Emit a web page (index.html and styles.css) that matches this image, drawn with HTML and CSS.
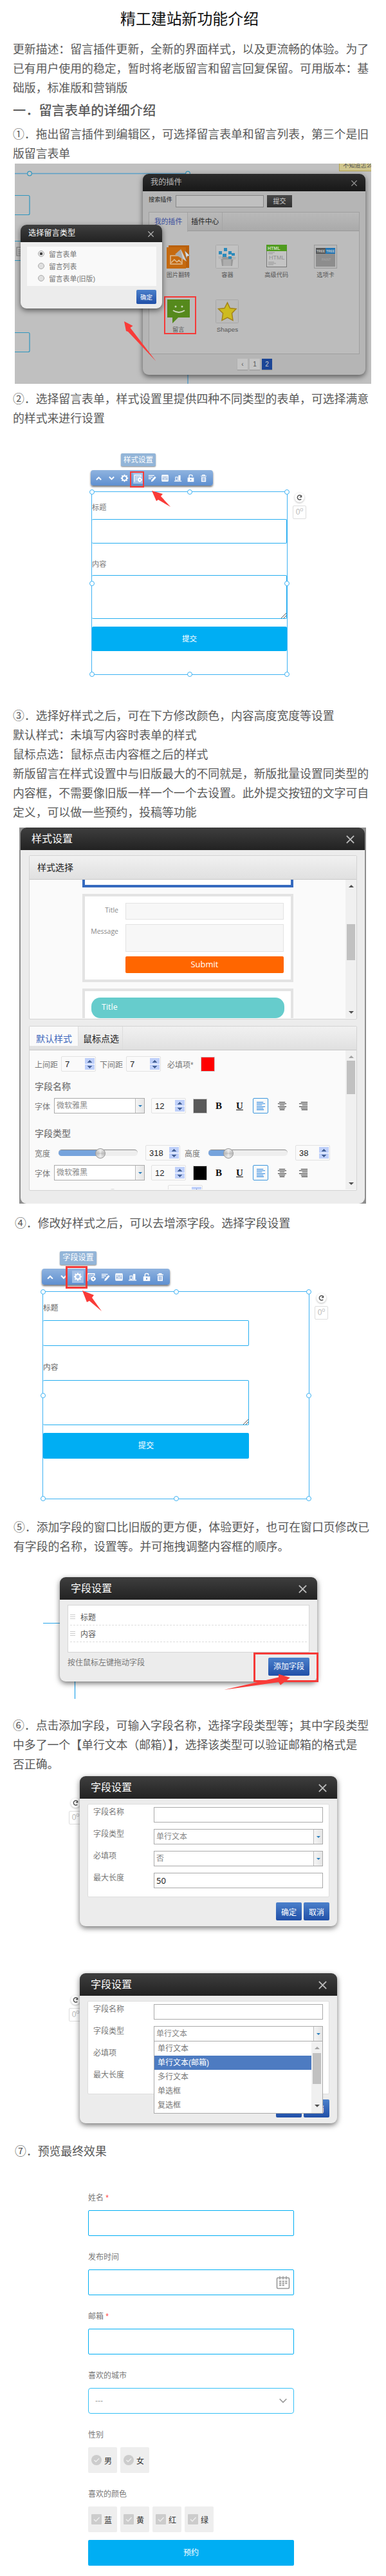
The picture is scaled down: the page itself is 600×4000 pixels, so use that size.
FILE: index.html
```html
<!DOCTYPE html>
<html lang="zh-CN">
<head>
  <meta charset="UTF-8" />
  <meta name="viewport" content="width=device-width, initial-scale=1.0" />
  <title>精工建站新功能介绍</title>
  <link rel="stylesheet" href="styles.css">
</head>
<body>
  <!-- shared icons -->
  <svg class="defs" width="0" height="0">
    <symbol id="i-up" viewBox="0 0 16 16"><path d="M3.5 11 8 6.500l4.500 4.500" fill="none" stroke="currentColor" stroke-width="2.400"/></symbol>
    <symbol id="i-down" viewBox="0 0 16 16"><path d="M3.500 5.500 8 10l4.500-4.500" fill="none" stroke="currentColor" stroke-width="2.400"/></symbol>
    <symbol id="i-gear" viewBox="0 0 16 16"><circle cx="8" cy="8" r="4.300" fill="none" stroke="currentColor" stroke-width="2.400"/><path d="M8 1v3M8 12v3M1 8h3M12 8h3M3 3l2 2M11 11l2 2M13 3l-2 2M5 11l-2 2" stroke="currentColor" stroke-width="2.200"/></symbol>
    <symbol id="i-style" viewBox="0 0 16 16"><path d="M1.500 15V2h12v4M4 5h2m1 0h2m1 0h2M4 8h2m1 0h1M4 11h2" fill="none" stroke="currentColor" stroke-width="1.500"/><circle cx="11.500" cy="11" r="2.800" fill="none" stroke="currentColor" stroke-width="2.400"/><path d="M11.500 6.500v2M11.500 13.500v2M7 11h2M14 11h2" stroke="currentColor" stroke-width="1.800"/></symbol>
    <symbol id="i-edit" viewBox="0 0 16 16"><path d="M1 3h11M1 6h8M1 9h5" stroke="currentColor" stroke-width="1.500"/><path d="m6 15 .800-3.500L13 4.500l2.600 2.200-6.200 7z" fill="currentColor"/></symbol>
    <symbol id="i-sliders" viewBox="0 0 16 16"><rect x="1.500" y="1.500" width="13" height="13" rx="1.500" fill="currentColor"/><path d="M4.500 4v8M8 4v8M11.500 4v8M3.300 9h2.400M6.800 6h2.400M10.300 9.500h2.400" stroke="#7299cf" stroke-width="1.200"/></symbol>
    <symbol id="i-align" viewBox="0 0 16 16"><path d="M1 13.700h14" stroke="currentColor" stroke-width="1.500"/><rect x="3.500" y="6" width="4" height="6" fill="none" stroke="currentColor" stroke-width="1.300"/><rect x="9" y="2.500" width="4" height="10" fill="currentColor"/></symbol>
    <symbol id="i-lock" viewBox="0 0 16 16"><path d="M5 8V3.500C5 1 11 1 11 3.500V5" fill="none" stroke="currentColor" stroke-width="1.700"/><path d="M2 7h12v8H2z" fill="currentColor"/><path d="M8 9.500v3" stroke="#6893d0" stroke-width="2"/></symbol>
    <symbol id="i-trash" viewBox="0 0 16 16"><path d="M2.500 4h11M6 3.500V2h4v1.500" fill="none" stroke="currentColor" stroke-width="1.500"/><path d="M3.500 6v9h9V6z" fill="currentColor"/><path d="M6 7v6.500M8 7v6.500M10 7v6.500" stroke="#6893d0"/></symbol>
    <symbol id="i-close" viewBox="0 0 16 16"><path d="m2 2 12 12M14 2 2 14" stroke="currentColor" stroke-width="2"/></symbol>
    <symbol id="i-rotate" viewBox="0 0 16 16"><path d="M12 11.500A5 5 0 1 1 12 4.500" fill="none" stroke="#555" stroke-width="2.200"/><path d="M13.500 2v6h-6z" fill="#555"/></symbol>
    <symbol id="i-left" viewBox="0 0 16 16"><path d="M1 1.500h11M1 4h14M1 6.500h9M1 9h14M1 11.500h11M1 14h12" stroke="currentColor" stroke-width="1.100"/></symbol>
    <symbol id="i-center" viewBox="0 0 16 16"><path d="M3 1.500h10M1 4h14M4 6.500h8M1 9h14M3 11.500h10M4 14h8" stroke="currentColor" stroke-width="1.100"/></symbol>
    <symbol id="i-right" viewBox="0 0 16 16"><path d="M4 1.500h11M1 4h14M6 6.500h9M1 9h14M4 11.500h11M5 14h10" stroke="currentColor" stroke-width="1.100"/></symbol>
    <symbol id="i-cal" viewBox="0 0 22 22"><rect x="1.500" y="4" width="19" height="16.500" rx="1.500" fill="none" stroke="currentColor" stroke-width="1.600"/><path d="M6 1.500v5M11 1.500v5M16 1.500v5" stroke="currentColor" stroke-width="1.500"/><path d="M5 9.500h12.500M5 12.500h12.500M5 15.500h8" stroke="currentColor" stroke-width="1.800" stroke-dasharray="3.200 1.400"/></symbol>
  </svg>

  <h1>精工建站新功能介绍</h1>
  <p>更新描述：留言插件更新，全新的界面样式，以及更流畅的体验。为了<br>已有用户使用的稳定，暂时将老版留言和留言回复保留。可用版本：基<br>础版，标准版和营销版</p>
  <h2>一．留言表单的详细介绍</h2>
  <p>①．拖出留言插件到编辑区，可选择留言表单和留言列表，第三个是旧<br>版留言表单</p>

  <!-- plugin window -->
  <div class="fig fig-plugin">
    <svg class="layer" width="554" height="342" fill="none" stroke="#2f96be" stroke-width="1.200">
      <path d="M0 15.500h269M269 15v327" stroke="#5a9fc8" stroke-width="1.500"/>
      <circle cx="23" cy="15.500" r="3.300" fill="#c8c8c8"/><circle cx="269" cy="15.500" r="3.300" fill="#c8c8c8"/>
      <path d="M0 49.500h21q2 0 2 2v26q0 2-2 2H0M0 120.500h23v30H0M0 262.500h21q2 0 2 2v26q0 2-2 2H0"/>
      <path d="M10 130H3v13h7M5 134h4m-4 3h4m-4 3h4" stroke="#777"/>
    </svg>
    <div class="note">不知道怎么</div>
    <div class="win win-plugin">
      <div class="win-head">我的插件<svg><use href="#i-close"/></svg></div>
      <div class="search"><span>搜索插件</span><div class="search-in"></div><div class="search-btn">提交</div></div>
      <div class="tabbox">
        <div class="tabs"><span class="tab on">我的插件</span><span class="tab">插件中心</span></div>
        <div class="plugins">
          <div class="plugin">
            <svg viewBox="0 0 36 37"><path d="M3 1h32v35H3z" fill="#b9600c"/><path d="M0 4h30v33H0z" fill="#c56a10"/><path d="M6 17h18v13H6z" fill="none" stroke="#e0bd92" stroke-width="1.500"/><path d="m7 28 5-5 4 4 3-3 4 4" fill="none" stroke="#e0bd92" stroke-width="1.500"/><path d="M13 15 22 7l9 19z" fill="#aaa"/><path d="m22 7 3 14 6 5z" fill="#d0d0d0"/><path d="m28 9 8 8-4 1-1 4z" fill="#ddd" stroke="#777" stroke-width=".5"/></svg>
            <span>图片翻转</span>
          </div>
          <div class="plugin">
            <svg viewBox="0 0 36 37"><rect x=".5" y=".5" width="35" height="36" rx="1" fill="#c2c2c2" stroke="#aaa"/><path d="M8 19h20l-2 14H10z" fill="#999"/><path d="m4 18 5-1 2 5H5zM26 18l6 1-1 4h-6z" fill="#b5b5b5"/><path d="M12 23h12v10H12z" fill="#adadad"/><path d="M5 10h5v5H5zM13 5h5v5h-5zM11 14h6v5h-6zM20 10h5v5h-5zM25 13h5v4h-5zM20 18h5v4h-5z" fill="#2c8abb"/></svg>
            <span>容器</span>
          </div>
          <div class="plugin">
            <svg viewBox="0 0 36 37"><rect x="2.500" y=".5" width="31" height="34" fill="#c4c4c4" stroke="#777"/><path d="M2 0h32v10H2z" fill="#4f9b1e"/><text x="4" y="8" font-size="7" font-weight="bold" fill="#cfe0c0">HTML</text><text x="6" y="23" font-size="9" fill="#919191">HTML</text><path d="M5 12h10M5 14h7M5 27h9M5 29h12M5 31h8" stroke="#999"/></svg>
            <span>高级代码</span>
          </div>
          <div class="plugin">
            <svg viewBox="0 0 36 37"><rect x=".5" y=".5" width="35" height="36" fill="#b9b9b9" stroke="#999"/><path d="M3 5h15v9H3z" fill="#555"/><path d="M18 5h15v9H18z" fill="#1d74b5"/><path d="M3 14h30v20H3z" fill="#8d8d8d"/><text x="4" y="11.500" font-size="5" font-weight="bold" fill="#ccc">TREE</text><text x="19" y="11.500" font-size="5" font-weight="bold" fill="#ccc">TREE</text><text x="12" y="25" font-size="5" fill="#a8a8a8">PAINT</text></svg>
            <span>选项卡</span>
          </div>
          <div class="plugin">
            <svg viewBox="0 0 36 37"><path d="M1 0h35v28H18l-9 9v-9H1z" fill="#55891c"/><circle cx="14" cy="11" r="1.500" fill="#ccd8bd"/><circle cx="24" cy="11" r="1.500" fill="#ccd8bd"/><path d="M10 17q9 6 18 0" fill="none" stroke="#ccd8bd" stroke-width="2"/></svg>
            <span>留言</span>
          </div>
          <div class="plugin">
            <svg viewBox="0 0 36 37"><rect x=".5" y=".5" width="35" height="36" rx="1" fill="#bababa" stroke="#a8a8a8"/><path d="m18.500 5 4 8.500 9.500 1-6.500 7 1.500 11-8.500-4.500-8.500 4.500 1.500-11-7-7 9.500-1z" fill="#cdbb1f" stroke="#a3831a" stroke-width="1.500"/></svg>
            <span class="latin">Shapes</span>
          </div>
        </div>
      </div>
      <div class="pager"><span>‹</span><span>1</span><span class="on">2</span></div>
    </div>
    <div class="red-box mark-plugin"></div>
    <div class="win win-type">
      <div class="win-head">选择留言类型<svg><use href="#i-close"/></svg></div>
      <div class="type-list">
        <div><i class="radio on"></i>留言表单</div>
        <div><i class="radio"></i>留言列表</div>
        <div><i class="radio"></i>留言表单(旧版)</div>
      </div>
      <div class="btn-blue">确定</div>
    </div>
    <svg class="layer" width="554" height="342"><path d="m170 245 13.500 7-4 3L219.500 307 176 261l-3-1z" fill="#f93b38"/></svg>
  </div>

  <p>②．选择留言表单，样式设置里提供四种不同类型的表单，可选择满意<br>的样式来进行设置</p>

  <!-- style setting button -->
  <div class="fig fig-style">
    <div class="tip">样式设置</div>
    <div class="toolbar">
      <svg><use href="#i-up"/></svg><svg><use href="#i-down"/></svg><svg><use href="#i-gear"/></svg><svg class="on"><use href="#i-style"/></svg><svg><use href="#i-edit"/></svg><svg><use href="#i-sliders"/></svg><svg><use href="#i-align"/></svg><svg><use href="#i-lock"/></svg><svg><use href="#i-trash"/></svg>
    </div>
    <div class="select-area">
      <div class="demo">
        <label>标题</label><div class="demo-in"></div>
        <label>内容</label><div class="demo-area"><svg width="8" height="8"><path d="M0 8 8 0M4 8l4-4" stroke="#555"/></svg></div>
        <div class="demo-btn">提交</div>
      </div>
      <i class="h tl"></i><i class="h tc"></i><i class="h tr"></i><i class="h ml"></i><i class="h mr"></i><i class="h bl"></i><i class="h bc"></i><i class="h br"></i>
    </div>
    <div class="rotate"><svg><use href="#i-rotate"/></svg><span>0<sup>o</sup></span></div>
    <div class="red-box mark-style"></div>
    <svg class="layer" width="600" height="140"><path d="m236 99 17 5-3 3.500L265 124l-19-11-3 2z" fill="#f93b38"/></svg>
  </div>

  <p>③．选择好样式之后，可在下方修改颜色，内容高度宽度等设置<br>默认样式：未填写内容时表单的样式<br>鼠标点选：鼠标点击内容框之后的样式<br>新版留言在样式设置中与旧版最大的不同就是，新版批量设置同类型的<br>内容框，不需要像旧版一样一个一个去设置。此外提交按钮的文字可自<br>定义，可以做一些预约，投稿等功能</p>

  <!-- style panel -->
  <div class="fig fig-panel">
    <div class="win win-big">
      <div class="win-head">样式设置<svg><use href="#i-close"/></svg></div>
      <div class="box box-styles">
        <div class="box-head">样式选择</div>
        <div class="box-body">
          <div class="cards">
            <div class="card first"></div>
            <div class="card second">
              <span>Title</span><div class="c-in"></div>
              <span>Message</span><div class="c-area"></div>
              <i></i><div class="c-btn">Submit</div>
            </div>
            <div class="card third"><div class="pill">Title</div></div>
          </div>
          <div class="scroll"><i class="a up"></i><b class="thumb"></b><i class="a dn"></i></div>
        </div>
      </div>
      <div class="box box-set">
        <div class="tabs"><span class="tab on">默认样式</span><span class="tab">鼠标点选</span></div>
        <div class="box-body">
          <div class="settings">
            <div class="row r1"><span>上间距</span><div class="spin">7<i></i></div><span class="gap">下间距</span><div class="spin">7<i></i></div><span class="need">必填项*</span><div class="swatch red"></div></div>
            <h4>字段名称</h4>
            <div class="row"><span>字体</span><div class="sel">微软雅黑<i></i></div><div class="spin mid">12<i></i></div><div class="swatch gray"></div><b class="fmt">B</b><b class="fmt u">U</b><div class="al on"><svg><use href="#i-left"/></svg></div><div class="al"><svg><use href="#i-center"/></svg></div><div class="al last"><svg><use href="#i-right"/></svg></div></div>
            <h4 class="type">字段类型</h4>
            <div class="row r3"><span>宽度</span><div class="slider"><i style="width:54%"></i></div><div class="spin">318<i></i></div><span class="hh">高度</span><div class="slider"><i style="width:26%"></i></div><div class="spin">38<i></i></div></div>
            <div class="row r4"><span>字体</span><div class="sel">微软雅黑<i></i></div><div class="spin mid">12<i></i></div><div class="swatch black"></div><b class="fmt">B</b><b class="fmt u">U</b><div class="al on"><svg><use href="#i-left"/></svg></div><div class="al"><svg><use href="#i-center"/></svg></div><div class="al last"><svg><use href="#i-right"/></svg></div></div>
            <div class="row r5"><div class="knob"></div><div class="spin">20<i></i></div></div>
          </div>
          <div class="scroll two"><i class="a up"></i><b class="thumb"></b><i class="a dn"></i></div>
        </div>
      </div>
    </div>
  </div>

  <p class="in3">④．修改好样式之后，可以去增添字段。选择字段设置</p>

  <!-- field setting button -->
  <div class="fig fig-field">
    <div class="tip">字段设置</div>
    <div class="toolbar">
      <svg><use href="#i-up"/></svg><svg><use href="#i-down"/></svg><svg class="on"><use href="#i-gear"/></svg><svg><use href="#i-style"/></svg><svg><use href="#i-edit"/></svg><svg><use href="#i-sliders"/></svg><svg><use href="#i-align"/></svg><svg><use href="#i-lock"/></svg><svg><use href="#i-trash"/></svg>
    </div>
    <div class="select-area">
      <div class="demo">
        <label>标题</label><div class="demo-in"></div>
        <label>内容</label><div class="demo-area"><svg width="8" height="8"><path d="M0 8 8 0M4 8l4-4" stroke="#555"/></svg></div>
        <div class="demo-btn">提交</div>
      </div>
      <i class="h tl"></i><i class="h tc"></i><i class="h tr"></i><i class="h ml"></i><i class="h mr"></i><i class="h bl"></i><i class="h bc"></i><i class="h br"></i>
    </div>
    <div class="rotate"><svg><use href="#i-rotate"/></svg><span>0<sup>o</sup></span></div>
    <div class="red-box mark-field"></div>
    <svg class="layer" width="600" height="140"><path d="m128 91 18 7-3 4 15 21-19-16-4 2z" fill="#f93b38"/></svg>
  </div>

  <p class="in1">⑤．添加字段的窗口比旧版的更方便，体验更好，也可在窗口页修改已<br>有字段的名称，设置等。并可拖拽调整内容框的顺序。</p>

  <!-- field list window -->
  <div class="fig fig-list">
    <svg class="layer" width="600" height="248"><path d="M67 105.500h40M116.500 190v33" stroke="#28a5ea" stroke-width="1.200"/></svg>
    <div class="win win-list">
      <div class="win-head">字段设置<svg><use href="#i-close"/></svg></div>
      <div class="field-list">
        <div class="item"><i></i>标题</div>
        <div class="item"><i></i>内容</div>
      </div>
      <div class="foot"><span>按住鼠标左键拖动字段</span><div class="btn-blue">添加字段</div></div>
    </div>
    <div class="red-box mark-add"></div>
    <svg class="layer" width="600" height="248"><path d="M451 190 433 184.500v5L348 209l85-12 3 4.500z" fill="#f93b38"/></svg>
  </div>

  <p>⑥．点击添加字段，可输入字段名称，选择字段类型等；其中字段类型<br>中多了一个【单行文本（邮箱）】，选择该类型可以验证邮箱的格式是<br>否正确。</p>

  <div class="fig fig-add">
    <div class="rotate"><svg><use href="#i-rotate"/></svg><span>0<sup>o</sup></span></div>
    <div class="win win-add">
      <div class="win-head">字段设置<svg><use href="#i-close"/></svg></div>
      <div class="add-form">
        <label>字段名称</label><div class="in"></div>
        <label>字段类型</label><div class="sel">单行文本<i></i></div>
        <label>必填项</label><div class="sel">否<i></i></div>
        <label>最大长度</label><div class="in">50</div>
      </div>
      <div class="foot"><div class="btn-blue">确定</div><div class="btn-blue">取消</div></div>
    </div>
  </div>

  <div class="fig fig-add open">
    <div class="rotate"><svg><use href="#i-rotate"/></svg><span>0<sup>o</sup></span></div>
    <div class="win win-add">
      <div class="win-head">字段设置<svg><use href="#i-close"/></svg></div>
      <div class="add-form">
        <label>字段名称</label><div class="in"></div>
        <label>字段类型</label><div class="sel">单行文本<i></i></div>
        <label>必填项</label><div></div>
        <label>最大长度</label><div></div>
      </div>
      <div class="foot"><div class="btn-blue"></div><div class="btn-blue">取消</div></div>
      <div class="menu">
        <div class="opts"><div>单行文本</div><div class="on">单行文本(邮箱)</div><div>多行文本</div><div>单选框</div><div>复选框</div></div>
        <div class="scroll two"><i class="a up"></i><b class="thumb"></b><i class="a dn"></i></div>
      </div>
    </div>
  </div>

  <p class="in3">⑦．预览最终效果</p>

  <!-- final form -->
  <div class="preview">
    <div class="group"><label>姓名 <em>*</em></label><div class="field"></div></div>
    <div class="group"><label>发布时间</label><div class="field"><svg width="22" height="22"><use href="#i-cal"/></svg></div></div>
    <div class="group"><label>邮箱 <em>*</em></label><div class="field"></div></div>
    <div class="group"><label>喜欢的城市</label><div class="field drop"><span>---</span><svg width="12" height="8"><path d="m.7 1 5.300 5.300L11.300 1" fill="none" stroke="#999" stroke-width="1.700"/></svg></div></div>
    <div class="group"><label>性别</label>
      <div class="chips">
        <div class="chip round"><svg viewBox="0 0 16 16"><path d="m4.500 8 2.500 2.500L12 5.500" fill="none" stroke="#eee" stroke-width="1.500"/></svg>男</div>
        <div class="chip round"><svg viewBox="0 0 16 16"><path d="m4.500 8 2.500 2.500L12 5.500" fill="none" stroke="#eee" stroke-width="1.500"/></svg>女</div>
      </div>
    </div>
    <div class="group"><label>喜欢的颜色</label>
      <div class="chips">
        <div class="chip"><svg viewBox="0 0 16 16"><path d="m4 8 3 3 5.500-6" fill="none" stroke="#eee" stroke-width="1.500"/></svg>蓝</div>
        <div class="chip"><svg viewBox="0 0 16 16"><path d="m4 8 3 3 5.500-6" fill="none" stroke="#eee" stroke-width="1.500"/></svg>黄</div>
        <div class="chip"><svg viewBox="0 0 16 16"><path d="m4 8 3 3 5.500-6" fill="none" stroke="#eee" stroke-width="1.500"/></svg>红</div>
        <div class="chip"><svg viewBox="0 0 16 16"><path d="m4 8 3 3 5.500-6" fill="none" stroke="#eee" stroke-width="1.500"/></svg>绿</div>
      </div>
    </div>
    <div class="submit">预约</div>
  </div>
</body>
</html>
```

FILE: styles.css
```css
* {
  box-sizing: border-box;
}
body {
  margin: 0;
  width: 600px;
  height: 4000px;
  overflow: hidden;
  background: #fff;
  color: #595959;
  font-family: "Liberation Sans", "Noto Sans CJK SC", sans-serif;
}
i, em {
  font-style: normal;
}
.defs {
  position: absolute;
}
h1 {
  margin: 0;
  padding: 10px 0 0 187px;
  line-height: 36px;
  font-size: 23.9px;
  font-weight: 400;
  color: #111;
  margin-bottom: 14px;
}
h2 {
  margin: 0;
  padding-left: 20px;
  font-size: 20.2px;
  line-height: 42px;
  font-weight: 500;
}
p {
  margin: 0;
  padding-left: 20px;
  font-size: 17.85px;
  line-height: 30px;
  white-space: nowrap;
}
h1, h2, p {
  font-family: "Noto Sans CJK SC", sans-serif;
}
.in1 {
  padding-left: 21px;
}
.in3 {
  padding-left: 23px;
}
.fig {
  position: relative;
  white-space: nowrap;
}
.layer {
  position: absolute;
  left: 0;
  top: 0;
}
.red-box {
  position: absolute;
  border: 2px solid #f53a38;
}

/* windows */
.win {
  position: absolute;
  background: #ececec;
  border-radius: 9px;
  box-shadow: 0 3px 9px rgba(0, 0, 0, .55);
}
.win-head {
  display: flex;
  align-items: center;
  justify-content: space-between;
  height: 35px;
  padding: 0 15px 3px 17px;
  background: linear-gradient(#3e3e3e, #222);
  border-radius: 9px 9px 0 0;
  color: #fff;
  font-size: 16px;
}
.win-head svg {
  width: 15px;
  height: 15px;
  color: #bbb;
  position: relative;
  top: 2px;
}
.btn-blue {
  display: flex;
  align-items: center;
  justify-content: center;
  height: 28px;
  border-radius: 2px;
  background: linear-gradient(#4b80cb, #2150a8);
  color: #fff;
  font-size: 12px;
}

/* plugin window */
.fig-plugin {
  width: 554px;
  height: 342px;
  margin: 2px 0 7px 23px;
  background: #c0c0c0;
  overflow: hidden;
}
.note {
  position: absolute;
  right: -6px;
  top: -8px;
  width: 56px;
  height: 20px;
  padding-left: 5px;
  border: 1px solid #b5a44e;
  background: #cfc68e;
  font-size: 9.2px;
  line-height: 20px;
  color: #555;
}
.win-plugin {
  left: 199px;
  top: 16px;
  width: 346px;
  height: 312px;
  background: #b5b5b5;
  color: #555;
  font-size: 9.2px;
}
.win-plugin .win-head,
.win-type .win-head {
  height: 27px;
  font-size: 12.2px;
  padding: 0 12px 3px 12px;
}
.win-plugin .win-head {
  color: #bbb;
  background: linear-gradient(#2c2c2c, #181818);
}
.win-plugin .win-head svg,
.win-type .win-head svg {
  width: 11px;
  height: 11px;
  color: #999;
}
.search {
  display: flex;
  padding: 6px 0 0 9px;
  height: 32px;
  color: #222;
}
.search span {
  width: 42px;
  line-height: 15px;
}
.search-in {
  width: 137px;
  height: 19px;
  border: 1px solid #888;
  background: #c0c0c0;
}
.search-btn {
  margin-left: 5px;
  width: 39px;
  height: 19px;
  background: linear-gradient(#484848, #303030);
  color: #ccc;
  font-size: 10px;
  line-height: 19px;
  text-align: center;
}
.tabbox {
  width: 328px;
  height: 221px;
  margin-left: 9px;
  border: 1px solid #9f9f9f;
  background: #bcbcbc;
}
.tabs {
  display: flex;
  height: 29px;
  background: linear-gradient(#b9b9b9, #aaa);
  border-bottom: 1px solid #999;
}
.tab {
  padding: 0 5px;
  font-size: 10.8px;
  line-height: 29px;
  color: #222;
  border-right: 1px solid #a5a5a5;
}
.tab.on {
  padding: 0 8px;
  height: 30px;
  background: #bcbcbc;
  color: #3b4f9e;
}
.plugins {
  display: grid;
  grid-template-columns: repeat(4, 76.3px);
  grid-auto-rows: 85px;
  padding: 21px 0 0 7px;
}
.plugin {
  text-align: center;
  line-height: 20px;
}
.plugin svg {
  display: block;
  width: 36px;
  height: 37px;
  margin: 0 auto;
}
.latin {
  font-size: 9.8px;
}
.pager {
  display: flex;
  gap: 3px;
  padding: 7px 0 0 147px;
}
.pager span {
  width: 16px;
  height: 17px;
  background: #c5c5c5;
  box-shadow: 0 1px 1px #999;
  text-align: center;
  font-size: 10px;
  line-height: 17px;
}
.pager .on {
  background: #1b4596;
  color: #ccc;
}
.mark-plugin {
  left: 232px;
  top: 206px;
  width: 50px;
  height: 59px;
}
.win-type {
  left: 9px;
  top: 95px;
  width: 220px;
  height: 130px;
}
.win-type .win-head svg {
  color: #bbb;
}
.type-list {
  width: 201px;
  height: 61px;
  margin: 7px 0 6px 10px;
  padding: 2px 0 0 17px;
  background: #f9f9f9;
  font-size: 10.8px;
  color: #777;
}
.type-list div {
  display: flex;
  align-items: center;
  height: 18.7px;
}
.radio {
  width: 10px;
  height: 10px;
  margin-right: 7px;
  border: 1px solid #aaa;
  border-radius: 50%;
  background: #e0e0e0;
}
.radio.on {
  background: radial-gradient(#444 0 2px, #e5e5e5 2.5px);
}
.win-type .btn-blue {
  width: 31px;
  height: 22px;
  margin-left: 180px;
  font-size: 9.5px;
}

/* editor canvas */
.fig-style {
  height: 432px;
}
.fig-field {
  height: 442px;
}
.tip {
  position: absolute;
  left: 188px;
  top: 41px;
  width: 54px;
  height: 20px;
  border-radius: 2px;
  background: #93b5d8;
  box-shadow: 0 1px 2px #888;
  color: #fff;
  font-size: 11.5px;
  line-height: 20px;
  text-align: center;
}
.toolbar {
  position: absolute;
  left: 141px;
  top: 67px;
  width: 190px;
  height: 24px;
  display: flex;
  align-items: center;
  justify-content: space-between;
  padding: 0 8px 0 6px;
  border-radius: 4px;
  background: linear-gradient(#8fb3df, #5e8fd0);
  box-shadow: 0 2px 3px rgba(0, 0, 0, .55);
  color: #fff;
}
.toolbar svg {
  width: 13px;
  height: 13px;
}
.toolbar .on {
  width: 15px;
  height: 17px;
  padding: 1px;
  background: #a3c1e8;
}
.select-area {
  position: absolute;
  left: 142px;
  top: 100px;
  width: 305px;
  height: 285px;
  border: 1px solid #3eb2f3;
}
.h {
  position: absolute;
  width: 8px;
  height: 8px;
  margin: -4px;
  border: 1px solid #3eb2f3;
  border-radius: 50%;
  background: #fff;
}
.tl, .ml, .bl { left: 0; }
.tc, .bc { left: 50%; }
.tr, .mr, .br { left: 100%; }
.tl, .tc, .tr { top: 0; }
.ml, .mr { top: 50%; }
.bl, .bc, .br { top: 100%; }
.demo {
  display: flex;
  flex-direction: column;
  font-size: 11.2px;
}
.demo label {
  height: 49px;
  padding-top: 9px;
  line-height: 30px;
  color: #777;
}
.demo-in {
  height: 38px;
}
.demo-in, .demo-area {
  border: 1px solid #25aef0;
  border-left: 0;
  border-radius: 2px;
}
.demo-in {
  margin-top: -7px;
}
.demo-in + label {
  padding-top: 17px;
}
.demo-area {
  height: 68px;
  display: flex;
  align-items: flex-end;
  justify-content: flex-end;
}
.demo-btn {
  height: 38px;
  margin-top: 12px;
  border-radius: 2px;
  background: #00aef3;
  color: #fff;
  font-size: 11.6px;
  line-height: 38px;
  text-align: center;
}
.rotate {
  position: absolute;
  left: 455px;
  top: 102px;
  width: 21px;
  display: flex;
  flex-direction: column;
  align-items: center;
  gap: 5px;
}
.rotate svg {
  width: 15px;
  height: 15px;
  padding: 2px;
  border-radius: 50%;
  box-shadow: 0 1px 3px #bbb;
}
.rotate span {
  width: 21px;
  height: 21px;
  border: 1px solid #ddd;
  border-radius: 2px;
  color: #bbb;
  font-size: 12px;
  line-height: 18px;
  text-align: center;
}
.rotate sup {
  font-size: 9px;
  line-height: 0;
}
.mark-style {
  left: 202px;
  top: 69px;
  width: 22px;
  height: 25px;
}
.fig-field .tip {
  left: 93px;
  top: 30px;
  width: 57px;
  height: 21px;
  font-size: 12.1px;
}
.fig-field .toolbar {
  left: 65px;
  top: 57px;
  width: 199px;
  height: 25px;
}
.fig-field .toolbar svg {
  width: 14px;
  height: 14px;
}
.fig-field .toolbar .on {
  width: 18px;
  height: 19px;
  padding: 2px;
  margin: 0 -2px;
}
.fig-field .select-area {
  left: 66px;
  top: 92px;
  width: 415px;
  height: 323px;
}
.fig-field .demo {
  width: 320px;
  font-size: 11.8px;
}
.fig-field .demo label {
  height: 53px;
  padding-top: 10px;
  color: #666;
}
.fig-field .demo-in {
  margin-top: -9px;
  height: 40px;
}
.fig-field .demo-in + label {
  padding-top: 18px;
}
.fig-field .demo-area {
  height: 70px;
}
.fig-field .demo-btn {
  height: 40px;
  line-height: 40px;
  font-size: 12.2px;
}
.fig-field .rotate {
  left: 489px;
  top: 95px;
}
.mark-field {
  left: 102px;
  top: 53px;
  width: 34px;
  height: 35px;
  border-width: 3px;
}

/* style panel */
.fig-panel {
  width: 539px;
  height: 584px;
  margin: 10px 0 14px 30px;
  background: #8d8d8d;
  overflow: hidden;
}
.win-big {
  left: 2px;
  top: 0;
  width: 535px;
  height: 584px;
  box-shadow: none;
}
.box {
  width: 510px;
  margin: 8px 0 0 13px;
  border: 1px solid #d3d3d3;
  border-radius: 2px;
  background: #fafafa;
}
.box-styles {
  height: 255px;
}
.box-head {
  height: 37px;
  padding-left: 12px;
  background: linear-gradient(#f1f1f1, #e0e0e0);
  border-bottom: 1px solid #c8c8c8;
  color: #222;
  font-size: 14px;
  line-height: 37px;
}
.box-body {
  display: flex;
  justify-content: space-between;
  overflow: hidden;
}
.box-styles .box-body {
  height: 215px;
}
.cards {
  padding-left: 82px;
}
.card {
  width: 328px;
  border: 4px solid #e3e3e3;
  background: #fff;
}
.first {
  height: 12px;
  border-color: #356abf;
  border-top: 0;
  margin-bottom: 10px;
}
.second {
  display: grid;
  grid-template-columns: 52px 246px;
  column-gap: 11px;
  grid-template-rows: 26px 43px 26px;
  row-gap: 7px;
  height: 137px;
  padding-top: 10px;
  font-family: "Open Sans", sans-serif;
  font-size: 10.5px;
  color: #888;
}
.second span {
  text-align: right;
  line-height: 22px;
}
.c-in, .c-area {
  border: 1px solid #e3e3e3;
  background: #f7f7f7;
}
.c-btn {
  border-radius: 2px;
  background: #f60;
  color: #fff;
  font-size: 13px;
  line-height: 25px;
  text-align: center;
}
.third {
  height: 60px;
  margin-top: 10px;
  padding: 10px;
}
.pill {
  width: 300px;
  height: 32px;
  padding-left: 16px;
  border-radius: 14px;
  background: #66cccc;
  color: #fff;
  font: 12.5px/30px "Open Sans", sans-serif;
}
.scroll {
  display: flex;
  flex-direction: column;
  align-items: center;
  width: 17px;
  background: #f0f0f0;
}
.thumb {
  width: 13px;
  height: 56px;
  margin: 57px 0 79px;
  background: #c1c1c1;
}
.a {
  width: 0;
  height: 0;
  border: 4px solid transparent;
}
.a.up {
  margin-top: 4px;
  border-bottom-color: #505050;
}
.a.dn {
  border-top-color: #505050;
}
.two .up {
  border-bottom-color: #a3a3a3;
}
.two .thumb {
  height: 52px;
  margin: 4px 0 137px;
}
.box-set {
  height: 256px;
  margin-top: 10px;
}
.box-set .tabs {
  height: 37px;
  background: linear-gradient(#f1f1f1, #e0e0e0);
  border-color: #c8c8c8;
}
.box-set .tab {
  width: 69px;
  padding: 0 7px;
  font-size: 14px;
  line-height: 39px;
  border-color: #ddd;
}
.box-set .tab.on {
  width: 76px;
  padding-left: 10px;
  background: #fafafa;
  color: #4169bd;
}
.box-set .box-body {
  height: 216px;
}
.settings {
  padding: 9px 0 0 8px;
  font-size: 12px;
  color: #777;
}
.row {
  display: flex;
  align-items: center;
  height: 24px;
}
.spin {
  display: flex;
  align-items: center;
  justify-content: space-between;
  width: 54px;
  height: 24px;
  padding: 0 1px 0 5px;
  border: 1px solid #e2e2e2;
  border-radius: 2px;
  color: #222;
  font-size: 13px;
}
.spin i {
  width: 15px;
  height: 18px;
  background:
    linear-gradient(#fff, #fff) 0 9px / 15px 1px no-repeat,
    conic-gradient(from 135deg at 50% 0, #456195 90deg, transparent 0) 4px 3px / 7px 4px no-repeat,
    conic-gradient(from -45deg at 50% 100%, #456195 90deg, transparent 0) 4px 12px / 7px 4px no-repeat,
    #bfd0fa;
}
.row > span + .spin {
  margin-left: 5px;
}
.gap {
  margin-left: 6px;
}
.need {
  width: 52px;
  margin-left: 10px;
}
.swatch {
  width: 22px;
  height: 23px;
  border: 1px solid #ccc;
}
.red { background: #f00; }
.gray { background: #595959; }
.black { background: #000; }
.settings h4 {
  margin: 12px 0 6px;
  font-size: 14px;
  line-height: 23px;
  font-weight: 500;
}
.sel {
  display: flex;
  justify-content: space-between;
  width: 141px;
  height: 24px;
  padding-left: 3px;
  border: 1px solid #aaa;
  background: #fff;
  color: #888;
  font-size: 12px;
  line-height: 22px;
}
.row .sel {
  margin-left: 6px;
}
.sel i {
  width: 14px;
  border-left: 1px solid #bbb;
  background: linear-gradient(90deg, #f5f5f5, #e5e5e5);
  display: flex;
  align-items: center;
  justify-content: center;
}
.sel i::after {
  content: "";
  margin-top: 3px;
  border: 3.5px solid transparent;
  border-top-color: #287dbb;
}
.mid {
  margin-left: 10px;
  margin-right: 11px;
}
.fmt {
  width: 36px;
  text-align: center;
  font: bold 15px "Liberation Serif", serif;
  color: #111;
}
.u {
  width: 29px;
  text-decoration: underline;
}
.al {
  display: flex;
  align-items: center;
  justify-content: center;
  width: 24px;
  height: 24px;
  margin-left: 9px;
  color: #333;
}
.fmt + .al {
  margin-left: 6px;
}
.al svg {
  width: 15px;
  height: 15px;
}
.al.on {
  border: 1px solid #3b96dd;
  border-radius: 2px;
  color: #2a86df;
}
.settings .type {
  margin: 20px 0 6px;
}
.slider {
  width: 123px;
  height: 10px;
  margin: 0 12px 0 13px;
  border-radius: 5px;
  border-top: 1px solid #888;
  background: #eee;
}
.slider i {
  display: flex;
  align-items: center;
  justify-content: flex-end;
  height: 9px;
  border-radius: 5px 0 0 5px;
  background: #76a3dc;
}
.slider i::after, .knob {
  content: "";
  flex: none;
  width: 14px;
  height: 14px;
  margin-right: -7px;
  border: 1px solid #999;
  border-radius: 50%;
  background: conic-gradient(#eee, #bbb, #eee, #bbb, #eee);
}
.hh {
  margin-left: 7px;
}
.r4 {
  margin-top: 7px;
}
.r5 {
  margin-top: 7px;
}
.knob {
  margin: 2px 79px 0 114px;
  opacity: .4;
}

/* field list window */
.fig-list {
  height: 248px;
}
.win-list {
  left: 93px;
  top: 34px;
  width: 400px;
  height: 162px;
}
.field-list {
  width: 376px;
  height: 74px;
  margin: 8px 0 0 12px;
  padding: 5px 3px;
  border: 1px solid #d5d5d5;
  background: #fff;
}
.item {
  display: flex;
  align-items: center;
  height: 26px;
  border-bottom: 1px dashed #ddd;
  font-size: 12px;
}
.item i {
  width: 8px;
  height: 7px;
  margin-right: 8px;
  background: repeating-linear-gradient(#ccc 0 1px, transparent 1px 3px);
}
.foot {
  display: flex;
}
.win-list .foot {
  justify-content: space-between;
  padding: 8px 12px;
  font-size: 12px;
  line-height: 16px;
  color: #777;
}
.win-list .btn-blue {
  width: 64px;
}
.mark-add {
  left: 394px;
  top: 151px;
  width: 101px;
  height: 46px;
  border-width: 3px;
}

/* add field window */
.fig-add {
  height: 248px;
}
.fig-add.open {
  height: 323px;
}
.win-add {
  left: 124px;
  top: 5px;
  width: 400px;
  height: 233px;
}
.open .win-add {
  top: 63px;
}
.fig-add .rotate {
  left: 107px;
  top: 39px;
}
.open .rotate {
  top: 97px;
}
.add-form {
  display: grid;
  grid-template-columns: 94px 263px;
  grid-auto-rows: 24px;
  row-gap: 10px;
  width: 376px;
  height: 145px;
  margin: 8px 0 8px 12px;
  padding: 4px 0 0 8px;
  border: 1px solid #ddd;
  border-radius: 2px;
  background: #fff;
  font-size: 12px;
  color: #777;
}
.add-form label {
  line-height: 16px;
}
.add-form .sel {
  width: 263px;
}
.in {
  padding-left: 3px;
  border: 1px solid #aaa;
  color: #111;
  font: 13px/22px "Open Sans", sans-serif;
}
.win-add .foot {
  gap: 3px;
  padding-left: 305px;
}
.win-add .btn-blue {
  width: 40px;
}
.menu {
  position: absolute;
  left: 115px;
  top: 106px;
  width: 263px;
  height: 112px;
  display: flex;
  border: 1px solid #aaa;
  border-top: 0;
  background: #fff;
}
.opts {
  flex: 1;
  font-size: 12px;
  color: #777;
}
.opts div {
  height: 22px;
  padding-left: 5px;
  line-height: 23px;
}
.opts .on {
  background: #4d7bc1;
  color: #fff;
}
.menu .scroll .thumb {
  height: 48px;
  margin: 6px 0 32px;
}

/* final form */
.preview {
  width: 320px;
  margin-left: 137px;
  padding-top: 48px;
  font-size: 12px;
  color: #777;
}
.group {
  height: 92px;
}
.group label {
  display: block;
  height: 30px;
  line-height: 23px;
}
em {
  color: #f44;
}
.field {
  display: flex;
  align-items: center;
  justify-content: flex-end;
  height: 40px;
  padding-right: 5px;
  border: 1px solid #00aef3;
  border-radius: 2px;
  color: #999;
}
.drop {
  justify-content: space-between;
  padding: 0 10px;
  border-color: #35c0f6;
  border-radius: 4px;
}
.chips {
  display: flex;
  gap: 5px;
}
.chip {
  display: flex;
  align-items: center;
  gap: 4px;
  width: 45px;
  height: 40px;
  padding-left: 5px;
  border-radius: 2px;
  background: #eee;
  color: #333;
}
.chip svg {
  width: 16px;
  height: 16px;
  background: #ccc;
  border-radius: 1px;
}
.round svg {
  border-radius: 50%;
}
.submit {
  height: 40px;
  margin-top: -10px;
  border-radius: 2px;
  background: #00aef3;
  color: #fff;
  line-height: 40px;
  text-align: center;
}
```
